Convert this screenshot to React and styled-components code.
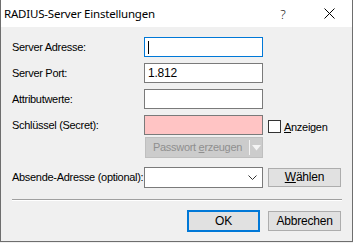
import React from "react";
import styled, { createGlobalStyle } from "styled-components";

const Global = createGlobalStyle`
  html, body { margin: 0; padding: 0; background: #f0f0f0; }
  body { width: 353px; height: 243px; overflow: hidden; }
`;

const Window = styled.div`
  box-sizing: border-box;
  width: 353px;
  height: 242px;
  border: 1px solid #6e6e6e;
  border-top: none;
  background: #f0f0f0;
  display: flex;
  flex-direction: column;
  font-family: "Liberation Sans", Arial, sans-serif;
  font-size: 11px;
  letter-spacing: -0.3px;
  color: #000;
`;

const TitleBar = styled.div`
  height: 27px;
  background: #fff;
  display: flex;
  align-items: center;
  padding-left: 3px;
  flex: none;
`;

const Title = styled.div`
  flex: 1;
  font-family: "Noto Sans", sans-serif;
  font-size: 11.5px;
  letter-spacing: -0.2px;
  padding-bottom: 1px;
`;

const TitleButton = styled.div`
  width: ${(p) => p.$w}px;
  height: 27px;
  display: flex;
  align-items: center;
  justify-content: center;
  font-family: "Noto Sans", sans-serif;
  font-size: 13px;
  font-weight: 300;
  letter-spacing: 0;
  color: #111;
`;

const Body = styled.div`
  flex: 1;
  padding: 10px 10px 0 11px;
  display: flex;
  flex-direction: column;
`;

const Row = styled.div`
  display: flex;
  align-items: center;
  height: ${(p) => p.$h || 20}px;
  margin-top: ${(p) => p.$mt || 0}px;
`;

const Label = styled.div`
  width: 132px;
  flex: none;
  white-space: nowrap;
  padding-bottom: 1px;
`;

const TextBox = styled.div`
  box-sizing: border-box;
  width: 119px;
  height: 20px;
  flex: none;
  background: ${(p) => (p.$pink ? "#ffc4c4" : "#fff")};
  border: 1px solid ${(p) => (p.$focus ? "#0078d7" : "#7a7a7a")};
  display: flex;
  align-items: center;
  padding-left: 3px;
  font-size: 12px;
  letter-spacing: -0.2px;
`;

const Caret = styled.span`
  display: block;
  width: 1px;
  height: 13px;
  background: #000;
`;

const Extra = styled.div`
  margin-left: 5px;
  display: flex;
  align-items: center;
`;

const CheckBox = styled.div`
  box-sizing: border-box;
  width: 13px;
  height: 13px;
  border: 1px solid #333;
  background: #fff;
  margin-top: 3px;
`;

const CheckLabel = styled.span`
  margin-left: 3px;
  margin-top: 3px;
  font-size: 11px;
`;

const U = styled.span`
  text-decoration: underline;
`;

const SplitButton = styled.div`
  box-sizing: border-box;
  margin-left: 133px;
  width: 118px;
  height: 21px;
  background: #cccccc;
  border: 1px solid #bfbfbf;
  display: flex;
  align-items: center;
  color: #8f8f8f;
`;

const SplitText = styled.div`
  flex: 1;
  padding-left: 7px;
  font-size: 11px;
  padding-bottom: 1px;
`;

const SplitDivider = styled.div`
  width: 1px;
  height: 15px;
  background: #f4f4f4;
`;

const SplitArrow = styled.div`
  width: 12px;
  display: flex;
  justify-content: center;
`;

const Combo = styled.div`
  box-sizing: border-box;
  width: 119px;
  height: 21px;
  flex: none;
  background: #fff;
  border: 1px solid #7a7a7a;
  display: flex;
  align-items: center;
  justify-content: flex-end;
  padding-right: 5px;
`;

const Button = styled.div`
  box-sizing: border-box;
  width: 73px;
  height: ${(p) => p.$h || 20}px;
  background: #e1e1e1;
  border: ${(p) => (p.$default ? "2px solid #0078d7" : "1px solid #adadad")};
  display: flex;
  align-items: center;
  justify-content: center;
  font-size: 12px;
  letter-spacing: -0.2px;
  padding-bottom: 1px;
`;

const Separator = styled.div`
  margin-top: 11px;
  width: 330px;
  height: 0;
  border-top: 1px solid #a0a0a0;
  border-bottom: 1px solid #ffffff;
`;

const Footer = styled.div`
  display: flex;
  justify-content: flex-end;
  align-items: center;
  gap: 8px;
  margin-top: 9px;
  padding-right: 1px;
`;

export default function App() {
  return (
    <>
      <Global />
      <Window>
        <TitleBar>
          <Title>RADIUS-Server Einstellungen</Title>
          <TitleButton $w={46}>?</TitleButton>
          <TitleButton $w={46}>
            <svg width="11" height="11" viewBox="0 0 11 11">
              <path d="M0.5 0.5 L10.5 10.5 M10.5 0.5 L0.5 10.5" stroke="#000" strokeWidth="1" fill="none" />
            </svg>
          </TitleButton>
        </TitleBar>
        <Body>
          <Row>
            <Label>Server Adresse:</Label>
            <TextBox $focus>
              <Caret />
            </TextBox>
          </Row>
          <Row $mt={6}>
            <Label>Server Port:</Label>
            <TextBox>1.812</TextBox>
          </Row>
          <Row $mt={6}>
            <Label>Attributwerte:</Label>
            <TextBox />
          </Row>
          <Row $mt={6}>
            <Label>Schlüssel (Secret):</Label>
            <TextBox $pink />
            <Extra>
              <CheckBox />
              <CheckLabel>
                <U>A</U>nzeigen
              </CheckLabel>
            </Extra>
          </Row>
          <Row $mt={2} $h={21}>
            <SplitButton>
              <SplitText>
                Passwort <U>e</U>rzeugen
              </SplitText>
              <SplitDivider />
              <SplitArrow>
                <svg width="9" height="6" viewBox="0 0 9 6">
                  <path d="M0 0 L9 0 L4.5 5.5 Z" fill="#f4f4f4" />
                </svg>
              </SplitArrow>
            </SplitButton>
          </Row>
          <Row $mt={9} $h={21}>
            <Label>Absende-Adresse (optional):</Label>
            <Combo>
              <svg width="9" height="5" viewBox="0 0 9 5">
                <path d="M0.5 0.5 L4.5 4.5 L8.5 0.5" stroke="#333" strokeWidth="1" fill="none" />
              </svg>
            </Combo>
            <Extra>
              <Button $h={19}>
                <span>
                  <U>W</U>ählen
                </span>
              </Button>
            </Extra>
          </Row>
          <Separator />
          <Footer>
            <Button $default $h={22}>OK</Button>
            <Button>Abbrechen</Button>
          </Footer>
        </Body>
      </Window>
    </>
  );
}
